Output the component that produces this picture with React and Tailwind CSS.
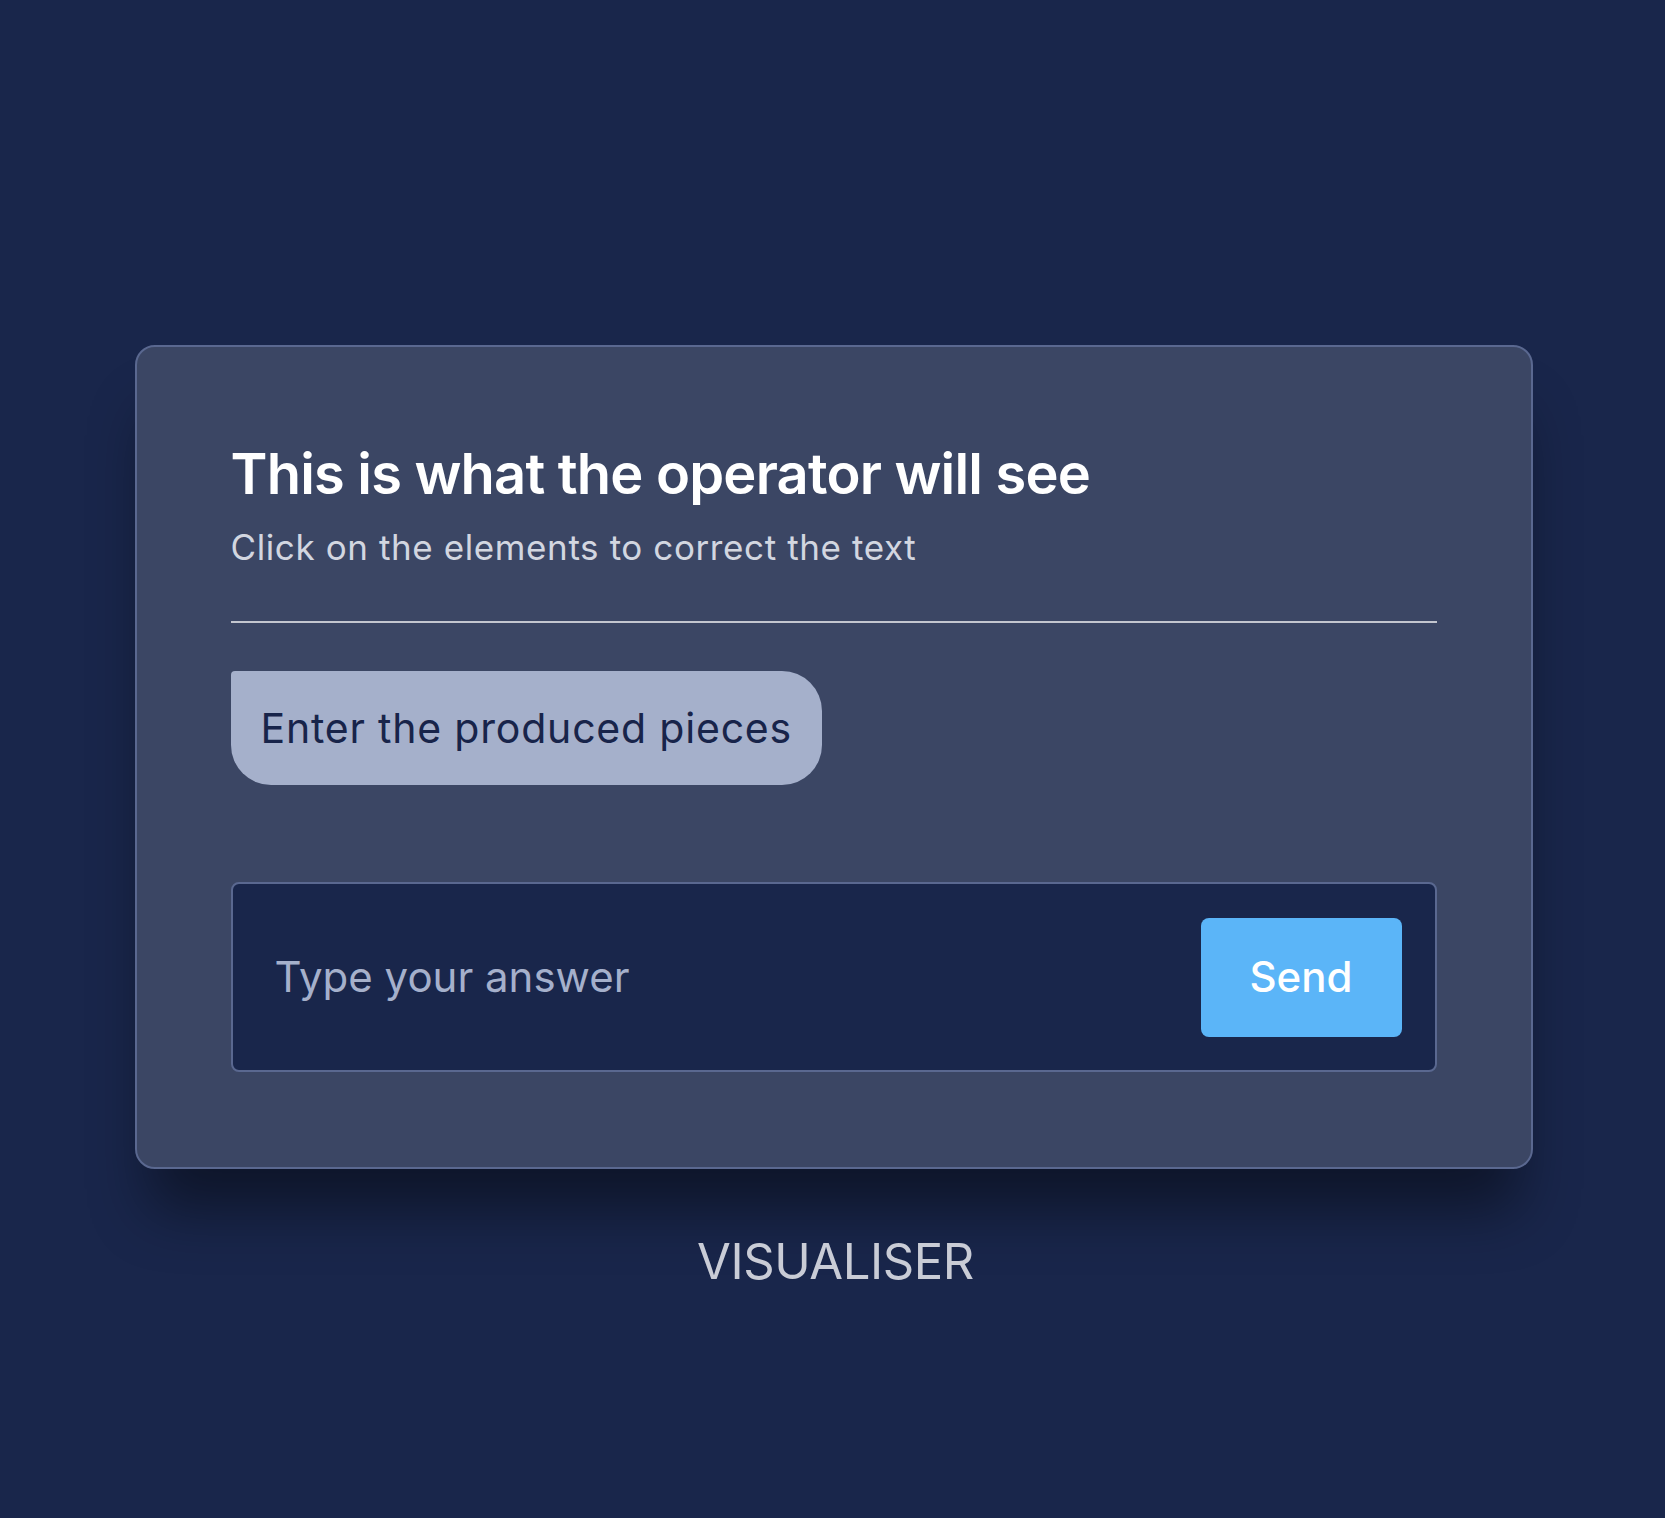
export default function App() {
  return (
    <div
      className="min-h-[1518px] w-full bg-[#19264b] flex flex-col items-center pt-[345px]"
      style={{ fontFamily: "Inter, 'Noto Sans', sans-serif" }}
    >
      <div className="ml-[2px] w-[1398px] rounded-[20px] border-2 border-[#5a6890] bg-[#3b4664] px-[94px] pt-[94px] pb-[95px] flex flex-col shadow-[0_55px_60px_-15px_rgba(0,0,0,0.45)]">
        <h1 className="text-[56px] leading-[1.2] font-semibold text-white tracking-[-0.8px]">
          This is what the operator will see
        </h1>
        <p className="mt-[18px] text-[35px] leading-[1.2] text-[#d2d6e0] tracking-[0.6px]">
          Click on the elements to correct the text
        </p>
        <div className="mt-[53px] h-[2px] bg-[#c3c6cf]" />
        <div className="mt-[48px] self-start h-[114px] px-[30px] flex items-center bg-[#a5b0cb] rounded-[40px] rounded-tl-[4px]">
          <span className="text-[41px] leading-[1.2] text-[#18244a] font-normal tracking-[0.8px]">
            Enter the produced pieces
          </span>
        </div>
        <div className="mt-[97px] h-[190px] rounded-[8px] border-2 border-[#5a6890] bg-[#19264b] pl-[42px] pr-[33px] flex items-center justify-between">
          <span className="text-[42px] leading-[1.2] text-[#a5b0cb]">Type your answer</span>
          <button className="w-[201px] h-[119px] rounded-[8px] bg-[#5bb5f8] text-white text-[42px] font-medium leading-[1.2] flex items-center justify-center">
            Send
          </button>
        </div>
      </div>
      <div className="mt-[64px] ml-[6px] text-[49px] leading-[1.2] text-[#c9ccd6] tracking-[-0.4px]">VISUALISER</div>
    </div>
  );
}
